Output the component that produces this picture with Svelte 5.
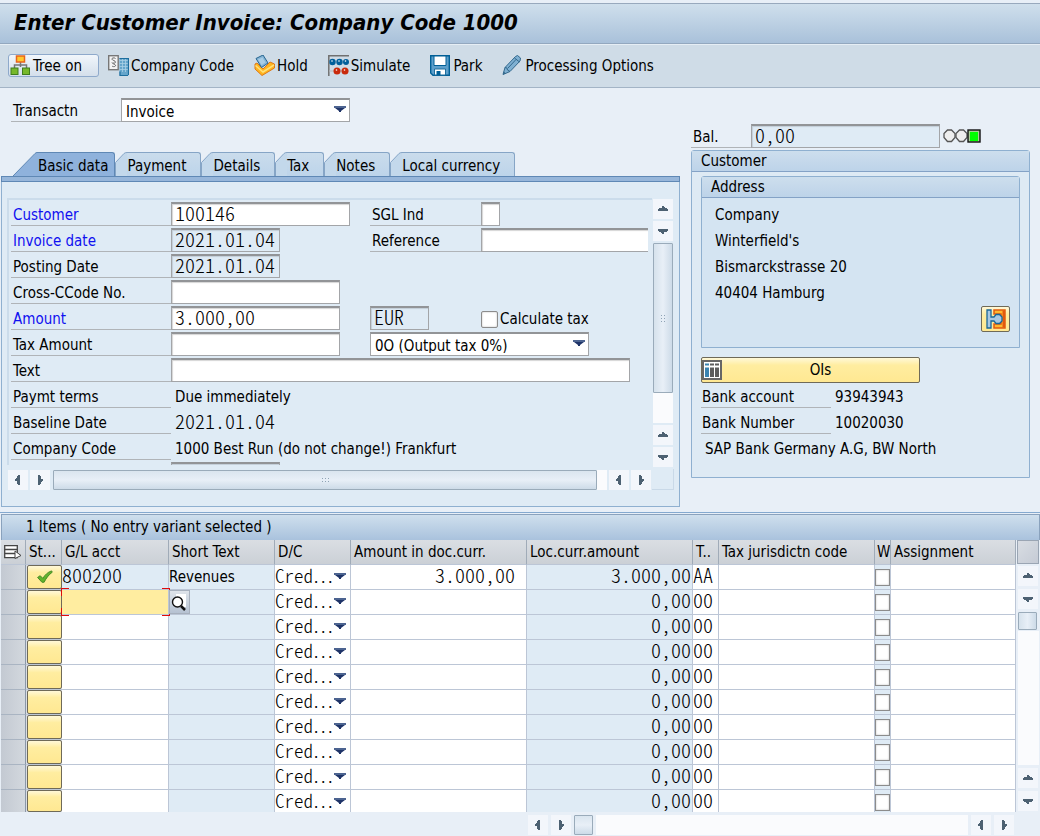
<script>
	let treeOn = true;
	let transaction = "Invoice";
	let activeTab = "Basic data";
	const tabs = ["Basic data", "Payment", "Details", "Tax", "Notes", "Local currency"];

	let customer = "100146";
	let invoiceDate = "2021.01.04";
	let postingDate = "2021.01.04";
	let crossCode = "";
	let amount = "3.000,00";
	let currency = "EUR";
	let calculateTax = false;
	let taxAmount = "";
	let taxCode = "0O (Output tax 0%)";
	let text = "";
	let sglInd = "";
	let reference = "";
	let balance = "0,00";

	const address = ["Company", "Winterfield's", "Bismarckstrasse 20", "40404 Hamburg"];

	const columns = [
		{ name: "G/L acct", cls: "gl" },
		{ name: "Short Text", cls: "short" },
		{ name: "D/C", cls: "dc" },
		{ name: "Amount in doc.curr.", cls: "doc" },
		{ name: "Loc.curr.amount", cls: "loc" },
		{ name: "T..", cls: "tx" },
		{ name: "Tax jurisdictn code", cls: "jur" },
		{ name: "W", cls: "w" },
		{ name: "Assignment", cls: "assign" },
	];

	let items = [
		{ ok: true, gl: "800200", short: "Revenues", doc: "3.000,00", loc: "3.000,00", tax: "AA" },
	];
	while (items.length < 10) {
		items.push({ ok: false, gl: "", short: "", doc: "", loc: "0,00", tax: "00" });
	}
	const focusRow = 1;
</script>

{#snippet arrow(dir)}
	<button class="arrow" aria-label="Scroll {dir}">
		<svg width="12" height="12" viewBox="0 0 12 12" class="to-{dir}">
			<path d="M5 3h2v1h1v1h2v1h1v2H1V6h1V5h3z" fill="#4d6172" />
		</svg>
	</button>
{/snippet}

{#snippet caret()}
	<svg class="caret" width="12" height="7" viewBox="0 0 12 7">
		<path d="M0 0h12v2H0z" fill="#4c6390" />
		<path d="M1 2h10L7 5v1H5V5z" fill="#1f3468" />
	</svg>
{/snippet}

<header class="title-bar">
	<h1>Enter Customer Invoice: Company Code 1000</h1>
</header>

<nav class="toolbar">
	<button class="tool boxed" on:click={() => (treeOn = !treeOn)}>
		<svg width="21" height="21" viewBox="0 0 21 21">
			<path d="M10.500 6v6M4.500 13v-3h12v3" fill="none" stroke="#777" stroke-width="1.500" />
			<rect x="6.500" y="1" width="8" height="6" fill="#ffc82e" stroke="#e8641b" stroke-width="1.500" />
			<rect x="1" y="13" width="7" height="6.500" fill="#76b82a" stroke="#3f7d1d" />
			<rect x="12.500" y="13" width="7" height="6.500" fill="#76b82a" stroke="#3f7d1d" />
		</svg>
		<span>Tree on</span>
	</button>
	<button class="tool">
		<svg width="21" height="21" viewBox="0 0 21 21">
			<rect x=".7" y=".7" width="9.500" height="14" fill="#f4f4f4" stroke="#777" stroke-width="1.400" />
			<path d="M7.500 3.500c-1-1-4-.8-3.500.8.300 1.200 3.500 1.200 3.500 2.800 0 1-1.500 1.300-2.500.8M4 11c1 1 4 .8 3.500-.8-.300-1.200-3.500-1.200-3.500-2.800" fill="none" stroke="#666" />
			<path d="M11.500 3h9v17.500h-9z" fill="#65a5cb" />
			<path d="M11.500 5.500h9M11.500 8.500h9M11.500 11.500h9M11.500 14.500h9M14.500 3v14M17.500 3v14" stroke="#a9cfe4" stroke-width=".8" />
			<path d="M11.500 3.500h9V20M12 16.500v4h8" fill="none" stroke="#1e6e9e" stroke-width="1.200" />
		</svg>
		<span>Company Code</span>
	</button>
	<button class="tool">
		<svg width="21" height="21" viewBox="0 0 21 21">
			<path d="M1 9l2-1 6 6 7-7 4.500 2v4L8 20.500 1 14z" fill="#ffb51f" stroke="#dd7817" />
			<path d="M1.500 10.500L9 17l11-7" fill="none" stroke="#ffe17a" stroke-width="1.500" />
			<path d="M2 3.500L9 0l5 8-6.500 4.500z" fill="#86b5d6" stroke="#27658f" />
			<path d="M4 4.500l4.500-2 3 5-4 2.500z" fill="#a9cee6" />
		</svg>
		<span>Hold</span>
	</button>
	<button class="tool">
		<svg width="21" height="21" viewBox="0 0 21 21">
			<path d="M.8 21V.8H21" fill="none" stroke="#707070" stroke-width="1.500" />
			<path d="M1 7h20M1 16h20" stroke="#b8b8b8" />
			<g fill="#005f9b"><circle cx="4.500" cy="7" r="3.200" /><circle cx="11.500" cy="7" r="3.200" /><circle cx="18" cy="7" r="3" /></g>
			<g fill="#c92a0c"><circle cx="9" cy="16" r="3.500" /><circle cx="17" cy="16" r="3.500" /></g>
			<g fill="#fff"><circle cx="4" cy="6" r=".8" /><circle cx="11" cy="6" r=".8" /><circle cx="17.500" cy="6" r=".8" /><circle cx="8.500" cy="15" r=".8" /><circle cx="16.500" cy="15" r=".8" /></g>
		</svg>
		<span>Simulate</span>
	</button>
	<button class="tool">
		<svg width="21" height="21" viewBox="0 0 21 21">
			<path d="M.7.7h18.600v19.600H3L.7 18z" fill="#5c9fcb" stroke="#005f96" stroke-width="1.400" />
			<path d="M4 1h12v9.500H4z" fill="#fff" stroke="#005f96" />
			<path d="M4.500 14h11v6h-11z" fill="#fff" stroke="#1e6e9e" />
			<path d="M6.500 16h4v4h-4z" fill="#005f96" />
		</svg>
		<span>Park</span>
	</button>
	<button class="tool">
		<svg width="21" height="21" viewBox="0 0 21 21">
			<path d="M1 19.500l2-7L13.500 1.500l2-1 3 2.500-.5 3L8 16.500z" fill="#7fb0d2" stroke="#33688c" />
			<path d="M3 12.500l2 .5.500 2 2.500 1.500M12.500 3l5 4M6 13l8-8.500" fill="none" stroke="#33688c" />
			<path d="M1 19.500l.8-3 2 2z" fill="#33688c" />
		</svg>
		<span>Processing Options</span>
	</button>
</nav>

<main>
	<section class="left">
		<div class="transaction">
			<label class="label" for="transaction">Transactn</label>
			<div class="select w229">
				<select id="transaction" bind:value={transaction}>
					<option>Invoice</option>
				</select>
				{@render caret()}
			</div>
		</div>

		<div class="tabs" role="tablist">
			{#each tabs as tab}
				<button
					class="tab"
					role="tab"
					class:active={tab === activeTab}
					aria-selected={tab === activeTab}
					on:click={() => (activeTab = tab)}
				>
					{#if tab === activeTab}
						<svg width="24" height="24" viewBox="0 0 24 24">
							<path d="M0 24L22 1.500Q23 .5 24 .5V24z" fill="#8fb2dc" />
							<path d="M0 24L22 1.500Q23 .5 24 .5" fill="none" stroke="#5f88b5" />
						</svg>
					{:else}
						<svg width="12" height="24" viewBox="0 0 12 24">
							<path d="M.5 24V10.500L9 1.500Q10 .5 12 .5V24z" fill="#c3d8eb" />
							<path d="M.5 24V10.500L9 1.500Q10 .5 12 .5" fill="none" stroke="#86a5c6" />
						</svg>
					{/if}
					<span>{tab}</span>
				</button>
			{/each}
		</div>

		<div class="panel">
			<div class="pane">
				<form class="fields" on:submit|preventDefault>
					<div class="row">
						<label class="label req" for="customer">Customer</label>
						<div><input id="customer" class="field w179" bind:value={customer} /></div>
						<label class="label" for="sgl">SGL Ind</label>
						<div><input id="sgl" class="field w19" bind:value={sglInd} /></div>
					</div>
					<div class="row">
						<label class="label req" for="inv-date">Invoice date</label>
						<div><input id="inv-date" class="field w109" readonly bind:value={invoiceDate} /></div>
						<label class="label" for="reference">Reference</label>
						<div><input id="reference" class="field open" bind:value={reference} /></div>
					</div>
					<div class="row">
						<label class="label" for="post-date">Posting Date</label>
						<div><input id="post-date" class="field w109" readonly bind:value={postingDate} /></div>
					</div>
					<div class="row">
						<label class="label" for="cross">Cross-CCode No.</label>
						<div><input id="cross" class="field w169" bind:value={crossCode} /></div>
					</div>
					<div class="row">
						<label class="label req" for="amount">Amount</label>
						<div><input id="amount" class="field w169" bind:value={amount} /></div>
						<div><input class="field w59" aria-label="Currency" readonly bind:value={currency} /></div>
						<label class="check"><input type="checkbox" bind:checked={calculateTax} />Calculate tax</label>
					</div>
					<div class="row">
						<label class="label" for="tax-amount">Tax Amount</label>
						<div><input id="tax-amount" class="field w169" bind:value={taxAmount} /></div>
						<div class="select w219">
							<select aria-label="Tax code" bind:value={taxCode}>
								<option>0O (Output tax 0%)</option>
							</select>
							{@render caret()}
						</div>
					</div>
					<div class="row">
						<label class="label" for="text">Text</label>
						<div class="rest"><input id="text" class="field w459" bind:value={text} /></div>
					</div>
					<div class="row">
						<span class="label">Paymt terms</span>
						<span class="value rest">Due immediately</span>
					</div>
					<div class="row">
						<span class="label">Baseline Date</span>
						<span class="value rest mono">2021.01.04</span>
					</div>
					<div class="row">
						<span class="label">Company Code</span>
						<span class="value rest">1000 Best Run (do not change!) Frankfurt</span>
					</div>
					<div class="row">
						<span></span>
						<div><input class="field w109" aria-label="Trading partner" readonly /></div>
					</div>
				</form>

				<div class="scroll-v">
					{@render arrow("up")}
					{@render arrow("down")}
					<div class="thumb tall"><i class="grip upright"></i></div>
					<div class="track"></div>
					{@render arrow("up")}
					{@render arrow("down")}
				</div>
				<div class="scroll-h">
					{@render arrow("left")}
					{@render arrow("right")}
					<div class="thumb long"><i class="grip"></i></div>
					<div class="track short-track"></div>
					{@render arrow("left")}
					{@render arrow("right")}
				</div>
				<div class="corner"></div>
			</div>
		</div>
	</section>

	<aside class="right">
		<div class="balance">
			<label class="label" for="balance">Bal.</label>
			<input id="balance" class="field w189" readonly bind:value={balance} />
			<svg width="38" height="14" viewBox="0 0 38 14" role="img" aria-label="Green">
				<g fill="#eee" stroke="#555" stroke-width="1.300">
					<path d="M4.500 1h4L12 4.500v4L8.500 12.500h-4L1 8.500v-4z" />
					<path d="M16.500 1h4L24 4.500v4L20.500 12.500h-4L13 8.500v-4z" />
				</g>
				<rect x="25" y="1" width="12" height="12" fill="#a8cd96" stroke="#111" stroke-width="1.400" />
				<rect x="27" y="3" width="8" height="9" fill="#0f0" />
			</svg>
		</div>

		<div class="group">
			<h2>Customer</h2>
			<div class="group address">
				<h2>Address</h2>
				{#each address as line}
					<p>{line}</p>
				{/each}
				<button class="yellow detail" aria-label="Display customer">
					<svg width="20" height="20" viewBox="0 0 20 20">
						<path d="M8 1h11v18H8v-4h7V5H8z" fill="#ffb82e" stroke="#e2590e" stroke-width="1.500" />
						<path d="M16.500 1.500h2.500v17h-2.500z" fill="#e2590e" />
						<path d="M1 1h4v7h3l2-2.500h3.500l2.500 2.500v4l-2.500 2.500H10L8 12H5v7H1z" fill="#a9c8e2" stroke="#1a6798" stroke-width="1.300" />
					</svg>
				</button>
			</div>
			<button class="yellow ois">
				<svg width="20" height="20" viewBox="0 0 20 20">
					<rect x="1" y="1" width="18" height="18" fill="#fff" stroke="#666" stroke-width="2" />
					<path d="M3 3.500h4v2H3zM3 7.500h4V17H3z" fill="#3a83b0" />
					<path d="M8 3.500h4v2H8zM13 3.500h4v2h-4zM8 7.500h4V17H8zM13 7.500h4V17h-4z" fill="#5c5c5c" />
				</svg>
				<span>OIs</span>
			</button>
			<div class="bank"><span class="label">Bank account</span><span>93943943</span></div>
			<div class="bank"><span class="label">Bank Number</span><span>10020030</span></div>
			<div class="bank name">SAP Bank Germany A.G, BW North</div>
		</div>
	</aside>
</main>

<section class="items">
	<h2>1 Items ( No entry variant selected )</h2>
	<div class="grid">
		<table>
			<thead>
				<tr>
					<th class="sel">
						<svg width="18" height="16" viewBox="0 0 18 16" role="img" aria-label="Configuration">
							<path d="M.7.700h12.600v12H.7zM.7 4.500h12.600M.7 8.500h12.600" fill="#fff" stroke="#444" stroke-width="1.300" />
							<path d="M11 6l6 4.500-6 3z" fill="#fff" stroke="#444" />
						</svg>
					</th>
					<th class="st">St...</th>
					{#each columns as col}
						<th class={col.cls}>{col.name}</th>
					{/each}
				</tr>
			</thead>
			<tbody>
				{#each items as item, i}
					<tr>
						<td class="sel"></td>
						<td class="st">
							<button class="yellow" aria-label="Item status">
								{#if item.ok}
									<svg width="18" height="14" viewBox="0 0 20 16">
										<path d="M1.500 8.500l3-2 3 3C10 5.500 13 2.500 17.500 1l.8 1.500C14 5.500 11 10 9 14H6.500z" fill="#62b32c" stroke="#3d8420" />
									</svg>
								{/if}
							</button>
						</td>
						<td class="gl mono" class:ro={item.ok} class:focus={i === focusRow}>
							<input aria-label="G/L acct" readonly={item.ok} bind:value={item.gl} />
							{#if i === focusRow}
								<i class="mark tl"></i><i class="mark tr"></i><i class="mark bl"></i><i class="mark br"></i>
								<button class="help" aria-label="Search help">
									<svg width="19" height="20" viewBox="0 0 19 20">
										<path d="M6 2h10v13H6z" fill="#fff" />
										<circle cx="7.500" cy="10" r="5" fill="#fff" stroke="#111" stroke-width="1.400" />
										<path d="M11 14l4 4" stroke="#111" stroke-width="2.500" />
									</svg>
								</button>
							{/if}
						</td>
						<td class="short ro">{item.short}</td>
						<td class="dc mono">
							<div class="select">
								<select aria-label="D/C"><option>Cred…</option></select>
								{@render caret()}
							</div>
						</td>
						<td class="doc mono"><input aria-label="Amount in doc.curr." bind:value={item.doc} /></td>
						<td class="loc ro mono"><input aria-label="Loc.curr.amount" readonly value={item.loc} /></td>
						<td class="tx mono"><input aria-label="Tax code" bind:value={item.tax} /></td>
						<td class="jur"><input aria-label="Tax jurisdictn code" /></td>
						<td class="w ro"><input type="checkbox" aria-label="W" /></td>
						<td class="assign"><input aria-label="Assignment" /></td>
					</tr>
				{/each}
			</tbody>
		</table>
		<div class="scroll-v side">
			<div class="cap"></div>
			{@render arrow("up")}
			{@render arrow("down")}
			<div class="thumb small"></div>
			<div class="track"></div>
			{@render arrow("up")}
			{@render arrow("down")}
		</div>
	</div>
	<div class="scroll-h bottom">
		{@render arrow("left")}
		{@render arrow("right")}
		<div class="thumb small"></div>
		<div class="track"></div>
		{@render arrow("left")}
		{@render arrow("right")}
	</div>
</section>

<style>
	:global(body) {
		background: #e8eff7;
		color: #000;
		font: 15px/24px "DejaVu Sans Condensed", "Noto Sans", sans-serif;
	}
	:global(*) {
		box-sizing: border-box;
	}
	button,
	input,
	select {
		font: inherit;
		font-feature-settings: inherit;
		color: inherit;
		margin: 0;
	}
	h1,
	h2,
	p {
		margin: 0;
		font-weight: normal;
		font-size: inherit;
	}
	svg {
		display: block;
		flex: none;
	}

	.title-bar {
		margin-top: 3px;
		height: 41px;
		padding: 7px 14px;
		border-top: 1px solid #98a9bd;
		border-bottom: 1px solid #93a8bf;
		background: linear-gradient(#cfdfec, #a9c1da);
	}
	h1 {
		font-size: 22px;
		font-weight: bold;
		font-style: italic;
		white-space: nowrap;
	}

	.toolbar {
		display: flex;
		gap: 9px;
		height: 44px;
		padding: 9px 8px 10px;
		border-top: 1px solid #e6eef5;
		border-bottom: 1px solid #a3b4c6;
		background: #cfdce7;
	}
	.tool {
		display: flex;
		align-items: center;
		gap: 2px;
		padding: 0 11px 0 0;
		border: 0;
		background: none;
		white-space: nowrap;
	}
	.boxed {
		padding: 0 16px 0 1px;
		border: 1px solid #8ea9cb;
		border-radius: 3px;
		background: linear-gradient(#f1f6fb, #d4dfeb);
	}

	main {
		display: grid;
		grid-template-columns: minmax(0, 680fr) minmax(0, 360fr);
	}
	.label {
		height: 24px;
		padding-left: 2px;
		border-bottom: 1px solid #b0b4b8;
		line-height: 26px;
		white-space: nowrap;
	}
	.field,
	.mono {
		font-family: "Noto Sans CJK KR", monospace;
		font-size: 20px;
		font-weight: 300;
		font-feature-settings: "hwid";
	}
	.field {
		display: block;
		height: 24px;
		padding: 0 3px 5px;
		border: 1px solid #a3a5a8;
		border-top: 2px solid #929497;
		background: #fff;
		box-shadow: inset 1px 1px 1px #d5d5d5;
		line-height: 16px;
		outline: none;
	}
	.field[readonly] {
		background: #dfebf5;
		box-shadow: inset 1px 1px 1px #c3ced8;
	}
	.w19 { width: 19px; }
	.w59 { width: 59px; }
	.w109 { width: 109px; }
	.w169 { width: 169px; }
	.w179 { width: 179px; }
	.w189 { width: 189px; }
	.w219 { width: 219px; }
	.w229 { width: 229px; }
	.w459 { width: 459px; }
	.open {
		width: 100%;
		border-right: 0;
	}

	.select {
		position: relative;
		height: 24px;
	}
	.select select {
		width: 100%;
		height: 24px;
		padding: 0 4px 2px;
		appearance: none;
		border: 1px solid #a3a5a8;
		border-top: 2px solid #929497;
		border-radius: 0;
		background: #fff;
		outline: none;
	}
	.caret {
		position: absolute;
		right: 4px;
		top: 8px;
		pointer-events: none;
	}

	.transaction {
		display: flex;
		margin: 10px 0 30px 11px;
	}
	.transaction .label {
		width: 110px;
	}

	.tabs {
		display: flex;
		padding-left: 13px;
	}
	.tab {
		display: flex;
		height: 24px;
		padding: 0;
		border: 0;
		background: none;
	}
	.tab span {
		height: 24px;
		padding-right: 14px;
		border: 1px solid #86a5c6;
		border-width: 1px 1px 0 0;
		border-radius: 0 3px 0 0;
		background: linear-gradient(#cadcec, #bdd4ea);
		line-height: 26px;
		white-space: nowrap;
	}
	.tab.active span {
		padding: 0 6px 0 1px;
		border-color: #5f88b5;
		background: #8fb2dc;
	}

	.panel {
		margin-left: 1px;
		padding: 0 5px 16px 5px;
		border: 1px solid #8fb0d0;
		border-top: 0;
		background: #dfebf5;
	}
	.panel::before {
		content: "";
		display: block;
		height: 4px;
		margin: 0 -6px 16px;
		border: 1px solid #5f88b5;
		background: #97b6da;
	}
	.pane {
		display: grid;
		grid-template-columns: minmax(0, 1fr) 22px;
		grid-template-rows: 271px 21px;
	}
	.fields {
		padding: 2px 4px 0 2px;
		border: 2px solid #cbdceb;
		border-width: 2px 0 0 2px;
		overflow: hidden;
		max-height: 267px;
	}
	.row {
		display: grid;
		grid-template-columns: 160px 199px 111px minmax(0, 1fr);
		height: 26px;
	}
	.rest {
		grid-column: span 3;
	}
	.req {
		color: #1010f0;
	}
	.value {
		height: 24px;
		padding-left: 4px;
		line-height: 26px;
	}
	.value.mono {
		line-height: 22px;
	}
	.check {
		display: flex;
		align-items: center;
		gap: 2px;
		height: 26px;
		white-space: nowrap;
	}
	input[type="checkbox"] {
		appearance: none;
		width: 17px;
		height: 17px;
		border: 1px solid #8c8c8c;
		background: #fff;
		box-shadow: inset 0 0 2px #bbb;
	}
	.check input {
		border-radius: 2px;
	}

	.scroll-v,
	.scroll-h {
		display: flex;
		gap: 2px;
	}
	.scroll-v {
		flex-direction: column;
		padding: 1px 1px 2px 1px;
	}
	.scroll-h {
		padding: 1px 1px 0 1px;
	}
	.arrow {
		display: flex;
		flex: none;
		align-items: center;
		justify-content: center;
		width: 20px;
		height: 20px;
		padding: 0;
		border: 0;
		background: #f3f6fb;
	}
	.to-down { transform: rotate(180deg); }
	.to-left { transform: rotate(-90deg); }
	.to-right { transform: rotate(90deg); }
	.thumb {
		display: flex;
		align-items: center;
		justify-content: center;
		border: 1px solid #9aabba;
		border-radius: 1px;
		background: linear-gradient(#dae5ef, #e8eff7 50%, #cddbe8);
	}
	.scroll-v .thumb {
		background: linear-gradient(90deg, #d6e2ec, #e8eff7 50%, #cddbe8);
	}
	.track {
		flex: 1;
		background: #fafbfd;
	}
	.tall {
		height: 150px;
	}
	.scroll-v .tall,
	.scroll-v .small {
		margin-bottom: -2px;
	}
	.long {
		flex: 1;
		margin: 0 -2px 0 1px;
	}
	.short-track {
		flex: 0 0 10px;
	}
	.small {
		flex: none;
		width: 19px;
		height: 18px;
	}
	.scroll-h .small {
		height: 20px;
	}
	.grip {
		width: 9px;
		height: 6px;
		background: radial-gradient(circle, #8fa3b5 1px, transparent 1px) 0 0 / 3px 3px;
	}
	.upright {
		width: 6px;
		height: 9px;
	}
	.corner {
		border: 1px solid #c9d9e8;
		border-width: 0 1px 1px 0;
	}

	.right {
		padding: 36px 10px 0 11px;
	}
	.balance {
		display: flex;
		align-items: center;
		margin-bottom: 2px;
	}
	.balance .label {
		width: 60px;
	}
	.balance svg {
		margin-left: 3px;
	}
	.group {
		padding-bottom: 15px;
		border: 1px solid #8fb0d0;
		border-radius: 3px 3px 0 0;
		background: #deeaf4;
	}
	.group h2 {
		height: 21px;
		padding-left: 9px;
		border-bottom: 1px solid #84a2c6;
		background: linear-gradient(#cddeed, #bdd3e9);
		line-height: 20px;
	}
	.address {
		margin: 4px 9px 9px;
		background: #d4e4f2;
	}
	.address h2 {
		margin-bottom: 4px;
	}
	.address p {
		padding-left: 13px;
		line-height: 26px;
	}
	.yellow {
		display: flex;
		align-items: center;
		justify-content: center;
		padding: 0;
		border: 1px solid #6f6a58;
		border-radius: 2px;
		background: linear-gradient(#fff8d8, #ffeda0 30%, #ffe892);
	}
	.detail {
		width: 29px;
		height: 26px;
		margin: 0 9px 0 auto;
	}
	.ois {
		width: 219px;
		height: 26px;
		margin: 0 9px 1px;
	}
	.ois span {
		flex: 1;
	}
	.bank {
		display: flex;
		gap: 4px;
		height: 24px;
		margin: 0 9px 2px;
		line-height: 26px;
	}
	.bank .label {
		width: 130px;
		padding-left: 1px;
	}
	.bank.name {
		padding-left: 4px;
	}

	.items {
		margin-top: 5px;
		padding-top: 1px;
		border-top: 1px solid #84a9cf;
	}
	.items h2 {
		height: 26px;
		margin-left: 1px;
		padding-left: 24px;
		border: 1px solid #8aa2bd;
		border-bottom: 0;
		background: linear-gradient(#cfdfed, #a9c2dd);
		line-height: 24px;
	}
	.grid {
		display: flex;
		padding-left: 1px;
	}
	table {
		flex: 1;
		width: 0;
		table-layout: fixed;
		border-spacing: 0;
	}
	th,
	td {
		height: 25px;
		padding: 0;
		border: 1px solid #bcc6d6;
		border-width: 0 1px 1px 0;
		background: #fff;
		overflow: hidden;
		white-space: nowrap;
		line-height: 24px;
	}
	td {
		vertical-align: top;
	}
	td.mono {
		line-height: 18px;
	}
	tbody tr:last-child td {
		height: 22px;
		border-bottom: 0;
	}
	tbody tr:last-child .short {
		line-height: 21px;
	}
	th {
		padding: 1px 0 0 3px;
		border-right-color: #a0abb8;
		background: linear-gradient(#dadee3, #cbd0d6);
		font-weight: normal;
		line-height: 23px;
		text-align: left;
	}
	td.ro {
		background: #dfebf5;
	}
	td input:not([type="checkbox"]) {
		display: block;
		width: 100%;
		height: 21px;
		padding: 0 0 3px;
		border: 0;
		background: none;
		outline: none;
	}
	.sel { width: 25px; }
	.st { width: 36px; }
	.gl { width: 107px; }
	.short { width: 106px; }
	.dc { width: 76px; }
	.doc { width: 176px; }
	.loc { width: 166px; }
	.tx { width: 26px; }
	.jur { width: 156px; }
	.w { width: 16px; }
	td.sel {
		border-right-color: #8b98a8;
		border-bottom-color: #a9b4c2;
		background: linear-gradient(90deg, #c3c9d2, #d3d8de);
	}
	td.st {
		border-right: 0;
		background: #d9dde4;
	}
	.st .yellow {
		width: 35px;
		height: 24px;
		margin-left: 1px;
	}
	tr:last-child .st .yellow {
		height: 22px;
	}
	td.gl {
		position: relative;
		overflow: visible;
	}
	td.focus {
		z-index: 1;
		background: #ffeda0;
	}
	.mark {
		position: absolute;
		width: 8px;
		height: 8px;
		border: 0 solid #e00b0b;
	}
	.tl { top: -2px; left: -1px; border-width: 1px 0 0 1px; }
	.tr { top: -2px; right: -2px; border-width: 1px 1px 0 0; }
	.bl { bottom: -2px; left: -1px; border-width: 0 0 1px 1px; }
	.br { bottom: -2px; right: -2px; border-width: 0 1px 1px 0; }
	.help {
		position: absolute;
		left: 107px;
		top: 0;
		width: 21px;
		height: 24px;
		padding: 0;
		border: 1px solid #a7b0bd;
		background: linear-gradient(#dfe4ea, #b6c2d2);
	}
	td.dc .select {
		height: 21px;
	}
	td.dc select {
		height: 21px;
		padding: 0 0 1px;
		border: 0;
		font-size: 19px;
	}
	td.dc .caret {
		top: 8px;
	}
	td.doc input,
	td.loc input {
		text-align: right;
	}
	td.doc input {
		padding-right: 11px;
	}
	td.loc input {
		padding-right: 1px;
	}
	th.w {
		padding-left: 2px;
	}
	td.w input {
		display: block;
		width: 15px;
		margin-top: 4px;
	}
	.side {
		width: 24px;
		gap: 3px;
		padding: 0 1px 1px 2px;
	}
	.cap {
		flex: none;
		width: 22px;
		height: 24px;
		margin: 0 -1px -1px;
		border: 1px solid #9aa5b3;
		background: linear-gradient(135deg, #d9dde3, #c5cbd5);
	}
	.bottom {
		gap: 3px;
		padding: 3px 26px 0 528px;
	}
</style>
